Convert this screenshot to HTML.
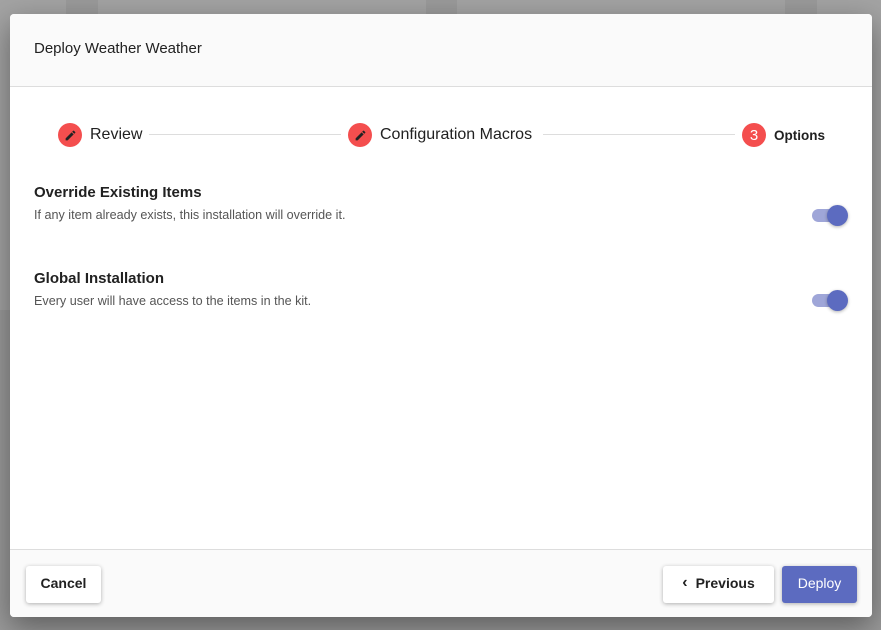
<!DOCTYPE html>
<html><head><meta charset="utf-8"><style>
*{box-sizing:border-box;margin:0;padding:0}
body{width:881px;height:630px;overflow:hidden;background:#9a9a9a;font-family:"Liberation Sans",sans-serif;position:relative;color:#212121}
.bgcard{position:absolute;background:#a3a3a3}
.modal{position:absolute;left:10px;top:14px;width:862px;height:603px;background:#fff;border-radius:4px;overflow:hidden;box-shadow:0 10px 30px rgba(0,0,0,.4)}
.hdr{height:73px;background:#fafafa;border-bottom:1px solid #ddd;padding:26px 24px;font-size:15px;font-weight:500}
.step{position:absolute;top:109px;display:flex;align-items:center;font-size:16px}
.ic{width:24px;height:24px;border-radius:50%;background:#f44e4e;display:flex;align-items:center;justify-content:center;margin-right:8px;color:#fff;font-size:14px}
.line{position:absolute;top:120px;height:1px;background:#ddd}
.opt{position:absolute;left:24px}
.opt h3{font-size:15px;font-weight:bold;margin-bottom:7px}
.opt p{font-size:12.6px;color:#555}
.tg{position:absolute;left:802px;width:34px;height:13px;border-radius:7px;background:#9fa6d8}
.tg:after{content:"";position:absolute;left:15px;top:-4px;width:21px;height:21px;border-radius:50%;background:#5c6bc0;box-shadow:0 1px 3px rgba(0,0,0,.3)}
.ftr{position:absolute;left:0;top:535px;width:100%;height:68px;background:#fafafa;border-top:1px solid #ddd}
.btn{position:absolute;top:16px;height:37px;border-radius:3px;background:#fff;box-shadow:0 1px 4px rgba(0,0,0,.3);font-size:14px;font-weight:bold;display:flex;align-items:center;justify-content:center;padding-bottom:3px}
</style></head><body>
<div class="bgcard" style="left:0;top:0;width:66px;height:310px"></div>
<div class="bgcard" style="left:98px;top:0;width:328px;height:310px"></div>
<div class="bgcard" style="left:457px;top:0;width:328px;height:310px"></div>
<div class="bgcard" style="left:817px;top:0;width:64px;height:310px"></div>
<div class="modal">
<div class="hdr">Deploy Weather Weather</div>
<div class="step" style="left:48px"><div class="ic"><svg width="13" height="13" viewBox="0 0 24 24"><path d="M3 17.25V21h3.75L17.8 9.94l-3.75-3.75L3 17.25zM20.7 7.04a1 1 0 000-1.41l-2.34-2.34a1 1 0 00-1.41 0l-1.83 1.83 3.75 3.75 1.83-1.83z" fill="#222"/></svg></div>Review</div>
<div class="line" style="left:139px;width:192px"></div>
<div class="step" style="left:338px"><div class="ic"><svg width="13" height="13" viewBox="0 0 24 24"><path d="M3 17.25V21h3.75L17.8 9.94l-3.75-3.75L3 17.25zM20.7 7.04a1 1 0 000-1.41l-2.34-2.34a1 1 0 00-1.41 0l-1.83 1.83 3.75 3.75 1.83-1.83z" fill="#222"/></svg></div>Configuration Macros</div>
<div class="line" style="left:533px;width:192px"></div>
<div class="step" style="left:732px;font-size:13.5px;font-weight:bold"><div class="ic" style="font-weight:normal;font-size:15px">3</div>Options</div>
<div class="opt" style="top:170px"><h3>Override Existing Items</h3><p>If any item already exists, this installation will override it.</p></div>
<div class="tg" style="top:195px"></div>
<div class="opt" style="top:256px"><h3>Global Installation</h3><p>Every user will have access to the items in the kit.</p></div>
<div class="tg" style="top:280px"></div>
<div class="ftr">
<div class="btn" style="left:16px;width:75px">Cancel</div>
<div class="btn" style="left:653px;width:111px"><span style="font-size:16px;margin-right:8px">&#8249;</span>Previous</div>
<div class="btn" style="left:772px;width:75px;background:#5c6bc0;color:#fff;font-weight:normal">Deploy</div>
</div>
</div>
</body></html>
